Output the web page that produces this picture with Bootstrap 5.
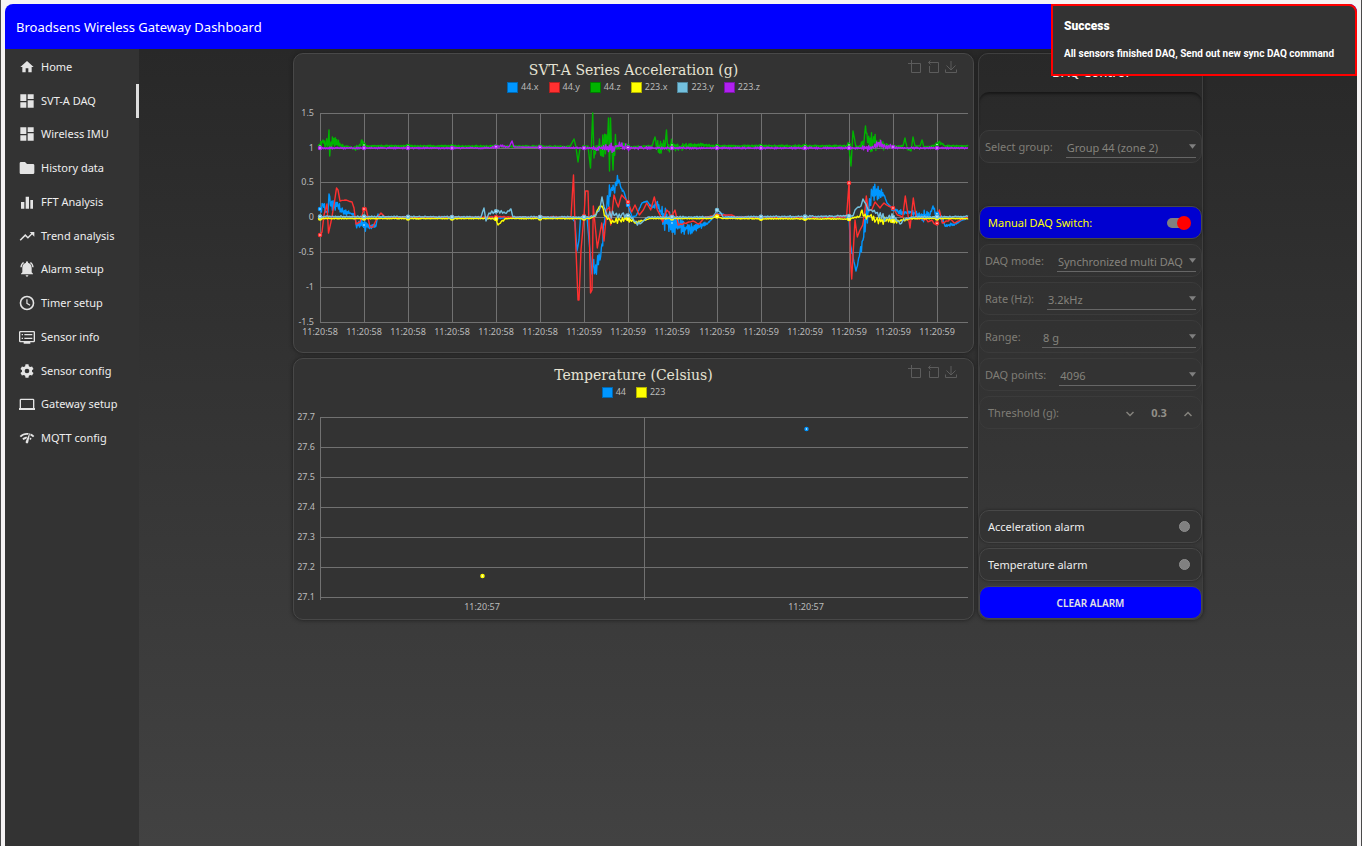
<!DOCTYPE html>
<html lang="en">
<head>
<meta charset="utf-8">
<meta name="viewport" content="width=device-width, initial-scale=1">
<title>Broadsens Wireless Gateway Dashboard</title>
<link href="https://cdn.jsdelivr.net/npm/bootstrap@5.3.0/dist/css/bootstrap.min.css" rel="stylesheet">
<style>
  body { font-family: "Noto Sans", "Open Sans", sans-serif; font-size: 11px; line-height: 16px; color: #eee; background: #f5f3f4; border: solid #4a4a4a; border-width: 0 1px; padding: 4px 4px 0; }
  .app-bar { height: 45px; background: #00f; border-radius: 8px 8px 0 0; padding: 0 11px; }
  .app-bar h1 { font-size: 13px; line-height: 20px; color: #fff; font-weight: 400; }
  .side-nav { width: 134px; background: #333; padding-top: 1px; }
  .side-nav ul { height: 405px; }
  .side-nav a { color: #eee; gap: 6px; padding-left: 14px; }
  .side-nav a.active { border-right: 3px solid #ddd; }
  .side-nav svg { width: 16px; height: 16px; fill: #e4e4e4; }
  .stage { background: linear-gradient(#282828, #424242); padding-top: 4px; }
  .board { max-width: 910px; gap: 4px; }
  .charts { flex: 1 1 0; min-width: 0; gap: 5px; }
  .panel { width: 225px; border: 1px solid #3f3f3f; border-radius: 10px; box-shadow: 0 0 4px #1c1c1c; }
  .chart-box { background: #333; border: 1px solid #484848; border-radius: 10px; box-shadow: 0 0 4px #1c1c1c; }
  .chart-head { height: 46px; padding-top: 8px; }
  .chart-head h2 { font-family: "DejaVu Serif", serif; font-size: 14px; line-height: 17px; color: #e6e3d3; }
  .legend-list { gap: 10px; font-size: 9px; line-height: 16px; color: #bbb; }
  .swatch { width: 11px; height: 11px; margin-right: 3px; border: 1px solid rgba(0,0,0,.3); }
  .tools { top: 5px; right: 14px; gap: 2px; }
  .tools button { width: 16px; height: 16px; border: 0; padding: 1px; background: none; display: flex; }
  .tools svg { width: 14px; height: 14px; fill: none; stroke: #5c5c5c; }
  .plot { width: 100%; height: auto; }
  .plot text { font-size: 9px; fill: #bbb; }
  .grid-lines path { stroke: #717171; fill: none; }
  .series path { fill: none; stroke-width: 1.4; stroke-linejoin: round; }
  .field { height: 33px; border: 1px solid #3b3b3b; border-radius: 10px; background: rgba(51,51,51,.5); color: #7f7d76; padding: 0 5px; }
  .field label { min-width: 44px; flex-shrink: 0; }
  .field select { appearance: none; min-width: 0; margin-left: 13px; padding: 4px 12px 1px 1px; border: 0; border-bottom: 1px solid #666; border-radius: 0; opacity: 1; color: #85837d;
    background: url("data:image/svg+xml,%3Csvg xmlns='http://www.w3.org/2000/svg' viewBox='0 0 8 5'%3E%3Cpath d='M0 0h8L4 5z' fill='%23808080'/%3E%3C/svg%3E") right 8px / 7px 5px no-repeat; }
  .field.live { border-color: #484848; background: #333; color: #eee; padding: 0 10px 0 8px; box-shadow: 0 0 3px #222; }
  .field.power { background: #0000d0; color: #ff0; }
  .panel-title { height: 33px; font-size: 13px; line-height: 37px; }
  .space-one { height: 33px; }
  .space-top { border-radius: 10px 10px 0 0; box-shadow: inset 0 3px 3px -1px #171717; }
  .space-two { height: 71px; }
  .rows { gap: 5px; }
  .power input { appearance: none; width: 24px; height: 10px; margin: 0; border-radius: 5px; background: linear-gradient(#808080, #808080) left / 20px no-repeat; }
  .power input::before { content: ""; display: block; width: 14px; height: 14px; margin: -2px 0 0 10px; border-radius: 50%; background: red; }
  .led { width: 11px; height: 11px; margin-right: 1px; border-radius: 50%; background: #808080; border: 1px solid #8d8d8d; }
  .stepper button { width: 16px; border: 0; padding: 0; background: none; }
  .stepper svg { width: 8px; height: 6px; fill: none; stroke: #85837d; stroke-width: 1.5; }
  .stepper input { width: 42px; border: 0; background: none; color: #929089; font-weight: 700; text-align: center; padding: 0; }
  .clear-btn { height: 33px; border: 1px solid #484848; border-radius: 10px; background: #00f; color: #e4e4e4; font-size: 10px; font-weight: 600; }
  .notice { top: 4px; right: 4px; width: 306px; height: 72px; border: 2px solid #f00; border-radius: 0 8px 0 0; background: #333; color: #fff; padding: 12px 11px; font-family: Roboto, sans-serif; font-weight: 700; font-size: 10px; z-index: 5; }
  .notice strong { font-size: 12px; margin-bottom: 12px; }
</style>
</head>
<body class="d-flex flex-column min-vh-100 position-relative">
<header class="app-bar d-flex align-items-center"><h1 class="m-0">Broadsens Wireless Gateway Dashboard</h1></header>
<div class="notice position-absolute text-nowrap" role="alert">
  <strong class="d-block">Success</strong>
  <span>All sensors finished DAQ, Send out new sync DAQ command</span>
</div>

<div class="d-flex flex-grow-1">
  <nav class="side-nav flex-shrink-0" aria-label="Main">
    <ul class="list-unstyled m-0 d-flex flex-column">
      <li class="flex-fill d-flex"><a href="#" class="w-100 d-flex align-items-center text-decoration-none"><svg viewBox="0 0 24 24"><path d="M10 20v-6h4v6h5v-8h3L12 3 2 12h3v8z"/></svg>Home</a></li>
      <li class="flex-fill d-flex"><a href="#" aria-current="page" class="active w-100 d-flex align-items-center text-decoration-none"><svg viewBox="0 0 24 24"><path d="M2 12h9V2H2v10zm0 10h9v-8H2v8zm11 0h9V11h-9v11zm0-20v7h9V2h-9z"/></svg>SVT-A DAQ</a></li>
      <li class="flex-fill d-flex"><a href="#" class="w-100 d-flex align-items-center text-decoration-none"><svg viewBox="0 0 24 24"><path d="M2 12h9V2H2v10zm0 10h9v-8H2v8zm11 0h9V11h-9v11zm0-20v7h9V2h-9z"/></svg>Wireless IMU</a></li>
      <li class="flex-fill d-flex"><a href="#" class="w-100 d-flex align-items-center text-decoration-none"><svg viewBox="0 0 24 24"><path d="M9 3H3a2 2 0 0 0-2 2v14c0 1.100.9 2 2 2h18a2 2 0 0 0 2-2V8a2 2 0 0 0-2-2h-9z"/></svg>History data</a></li>
      <li class="flex-fill d-flex"><a href="#" class="w-100 d-flex align-items-center text-decoration-none"><svg viewBox="0 0 24 24"><path d="M3 12h5v10H3zM10 4h5v18h-5zM17 9h4v13h-4z"/></svg>FFT Analysis</a></li>
      <li class="flex-fill d-flex"><a href="#" class="w-100 d-flex align-items-center text-decoration-none"><svg viewBox="0 0 24 24"><path d="M16 6l2.290 2.290-4.880 4.880-4-4L1 17.600 2.600 19l6.810-6.810 4 4 6.300-6.290L23 13V6z"/></svg>Trend analysis</a></li>
      <li class="flex-fill d-flex"><a href="#" class="w-100 d-flex align-items-center text-decoration-none"><svg viewBox="0 0 24 24"><path d="M7.580 3.080L6.150 1.650C3.750 3.480 2.170 6.300 2.030 9.500h2a8.450 8.450 0 0 1 3.550-6.420zM19.970 9.500h2c-.15-3.200-1.730-6.020-4.120-7.850l-1.420 1.430a8.500 8.500 0 0 1 3.540 6.420zM19 10c0-3.500-2.300-6.500-5.500-7.300V2a1.500 1.500 0 0 0-3 0v.7C7.300 3.500 5 6.500 5 10v7l-2 2v1h18v-1l-2-2zM12 23.500c1.200 0 2-.9 2-2h-4c0 1.100.9 2 2 2z"/></svg>Alarm setup</a></li>
      <li class="flex-fill d-flex"><a href="#" class="w-100 d-flex align-items-center text-decoration-none"><svg viewBox="0 0 24 24"><path fill-rule="evenodd" d="M12 1a11 11 0 1 0 0 22 11 11 0 0 0 0-22zm0 2.400a8.600 8.600 0 1 1 0 17.200 8.600 8.600 0 0 1 0-17.200zM11 6.500h1.800v5.600l4.300 2.600-.9 1.500L11 13z"/></svg>Timer setup</a></li>
      <li class="flex-fill d-flex"><a href="#" class="w-100 d-flex align-items-center text-decoration-none"><svg viewBox="0 0 24 24"><path fill-rule="evenodd" d="M2 3h20a2 2 0 0 1 2 2v13a2 2 0 0 1-2 2h-5v2H7v-2H2a2 2 0 0 1-2-2V5c0-1.100.9-2 2-2zm0 2v13h20V5zM4 7.500h2v2H4zM8 7.500h12v2H8zM4 13h2v2H4zM8 13h12v2H8z"/></svg>Sensor info</a></li>
      <li class="flex-fill d-flex"><a href="#" class="w-100 d-flex align-items-center text-decoration-none"><svg viewBox="0 0 24 24"><path fill-rule="evenodd" d="M9.800 1h4.400l.6 3 1.900 1.100 2.900-1 2.200 3.800-2.300 2v2.200l2.300 2-2.200 3.800-2.900-1-1.900 1.100-.6 3H9.800l-.6-3-1.900-1.100-2.900 1-2.200-3.800 2.300-2V9.900l-2.300-2 2.200-3.800 2.900 1L9.200 4zM12 7.500a3.500 3.500 0 1 0 0 7 3.500 3.500 0 0 0 0-7z" transform="translate(0 1)"/></svg>Sensor config</a></li>
      <li class="flex-fill d-flex"><a href="#" class="w-100 d-flex align-items-center text-decoration-none"><svg viewBox="0 0 24 24"><path fill-rule="evenodd" d="M3 4h18a2 2 0 0 1 2 2v12h1v3H0v-3h1V6c0-1.100.9-2 2-2zm0 2v12h18V6z"/></svg>Gateway setup</a></li>
      <li class="flex-fill d-flex"><a href="#" class="w-100 d-flex align-items-center text-decoration-none"><svg viewBox="0 0 24 24"><path d="M15.900 5c-.17 0-.32.09-.41.230l-.07.150-5.180 11.650a2 2 0 1 0 3.670 1.480L16.400 5.600c0-.33-.2-.6-.5-.6zM1 9l2 2c2.900-2.900 6.800-4.100 10.500-3.600l1.200-2.700C9.900 3.800 4.700 5.300 1 9zm20 2l2-2a15.400 15.400 0 0 0-5.600-3.600l-.5 2.800c1.500.6 2.900 1.500 4.100 2.800zm-4 4l2-2a9.900 9.900 0 0 0-2.700-1.900l-.5 2.900c.4.300.8.600 1.200 1zM5 13l2 2a7 7 0 0 1 4-2l1.300-2.900C9.700 10 7 11 5 13z"/></svg>MQTT config</a></li>
    </ul>
  </nav>

  <main class="stage flex-grow-1">
    <div class="board d-flex mx-auto align-items-start">
      <div class="charts d-flex flex-column">
        <section class="chart-box position-relative">
          <div class="chart-head text-center">
            <h2 class="m-0">SVT-A Series Acceleration (g)</h2>
            <ul class="legend-list list-unstyled m-0 d-flex justify-content-center" id="accLegend"></ul>
          </div>
          <div class="tools position-absolute d-flex">
            <button type="button" aria-label="Zoom area"><svg viewBox="0 0 14 14"><path d="M3.500 0v12.500h9v-9H0"/></svg></button>
            <button type="button" aria-label="Reset zoom"><svg viewBox="0 0 14 14"><path d="M4.500 .5L2.500 2.500l2 2M2.500 2.500h10v10h-9V6"/></svg></button>
            <button type="button" aria-label="Save as image"><svg viewBox="0 0 14 14"><path d="M1.500 9.500v3h11v-3M7 1v9M2.500 5.500l4.500 4.500 4.500-4.500"/></svg></button>
          </div>
          <svg class="plot d-block" viewBox="294 100 679 252" id="accPlot" role="img" aria-label="Acceleration over time"></svg>
        </section>
        <section class="chart-box position-relative">
          <div class="chart-head text-center">
            <h2 class="m-0">Temperature (Celsius)</h2>
            <ul class="legend-list list-unstyled m-0 d-flex justify-content-center" id="tempLegend"></ul>
          </div>
          <div class="tools position-absolute d-flex">
            <button type="button" aria-label="Zoom area"><svg viewBox="0 0 14 14"><path d="M3.500 0v12.500h9v-9H0"/></svg></button>
            <button type="button" aria-label="Reset zoom"><svg viewBox="0 0 14 14"><path d="M4.500 .5L2.500 2.500l2 2M2.500 2.500h10v10h-9V6"/></svg></button>
            <button type="button" aria-label="Save as image"><svg viewBox="0 0 14 14"><path d="M1.500 9.500v3h11v-3M7 1v9M2.500 5.500l4.500 4.500 4.500-4.500"/></svg></button>
          </div>
          <svg class="plot d-block" viewBox="294 405 679 214" id="tempPlot" role="img" aria-label="Temperature over time"></svg>
        </section>
      </div>

      <form class="panel flex-shrink-0">
        <div class="rows d-flex flex-column">
          <h2 class="panel-title m-0 text-center">DAQ Control</h2>
          <div class="space-one space-top"></div>
          <div class="field d-flex align-items-center"><label for="grp">Select group:</label><select id="grp" class="flex-fill" disabled><option>Group 44 (zone 2)</option></select></div>
          <div class="space-one"></div>
          <div class="field live power d-flex align-items-center justify-content-between"><label for="manual">Manual DAQ Switch:</label><input type="checkbox" role="switch" id="manual" checked></div>
          <div class="field d-flex align-items-center"><label for="mode">DAQ mode:</label><select id="mode" class="flex-fill" disabled><option>Synchronized multi DAQ</option></select></div>
          <div class="field d-flex align-items-center"><label for="rate">Rate (Hz):</label><select id="rate" class="flex-fill" disabled><option>3.2kHz</option></select></div>
          <div class="field d-flex align-items-center"><label for="range">Range:</label><select id="range" class="flex-fill" disabled><option>8 g</option></select></div>
          <div class="field d-flex align-items-center"><label for="points">DAQ points:</label><select id="points" class="flex-fill" disabled><option>4096</option></select></div>
          <div class="field d-flex align-items-center justify-content-between ps-2"><label for="thr">Threshold (g):</label>
            <div class="stepper d-flex align-items-center">
              <button type="button" disabled aria-label="Decrease"><svg viewBox="0 0 8 6"><path d="M.5 1L4 4.500 7.500 1"/></svg></button>
              <input id="thr" type="text" value="0.3" disabled>
              <button type="button" disabled aria-label="Increase"><svg viewBox="0 0 8 6"><path d="M.5 5L4 1.500 7.500 5"/></svg></button>
            </div>
          </div>
          <div class="space-two"></div>
          <div class="field live d-flex align-items-center justify-content-between">Acceleration alarm<span class="led"></span></div>
          <div class="field live d-flex align-items-center justify-content-between">Temperature alarm<span class="led"></span></div>
          <button type="button" class="clear-btn">CLEAR ALARM</button>
        </div>
      </form>
    </div>
  </main>
</div>

<script src="https://cdn.jsdelivr.net/npm/bootstrap@5.3.0/dist/js/bootstrap.bundle.min.js"></script>
<script>
  // Each series: x y spread triples; the line is interpolated between them and jittered by the spread.
  const series = [
    { name: '44.x', color: '#0096ff', step: .7, pts: '320 209 4,323 204 8,326 212 3,328 212 0,329 194 0,331 206 7,338 206 5,343 212 3,350 213 2,354 215 1,356 224 4,364 225 7,370 227 4,376 226 1,378 214 0,380 218 .6,572 218 .6,575 222 0,577 251 0,579 240 0,580.5 218 0,587 217 0,589 240 0,592 274 0,593 262 8,595 272 5,597 265 9,600 260 11,602 244 11,604 225 5,606 210 5,608 200 9,611 190 13,614 190 9,616 182 13,619 180 10,621 188 4,624 192 0,627 202 0,629 208 0,632 217 1,636 216 0,642 203 1,647 201 1,652 208 1,656 204 4,660 210 6,664 218 14,670 222 11,680 227 9,690 229 6,700 226 4,708 223 1,714 217 0,720 213 1,730 217 .6,846 217 .6,849 218 0,850.500 245 0,854 262 6,856 271 0,858 262 4,860 252 6,863 240 11,866 215 13,870 205 14,872 192 10,876 192 9,880 192 6,884 195 1,887 203 0,893 209 1,898 212 2,905 212 3,915 213 3,920 216 7,930 215 5,933 206 2,935 213 5,940 215 4,945 226 3,955 224 1,962 220 1,968 218 0' },
    { name: '44.y', color: '#ff3030', step: 2, pts: '320 235 0,322 232 0,324 215 0,327 204 0,328.5 233 0,331 222 0,334 205 0,336.5 188 0,338 190 0,340 201 0,345 200 .5,352 202 0,354 208 0,356 224 0,360 222 0,364 209 0,366 208 0,370 227 0,373 227 0,377 218 0,381 213 0,385 217 0,390 217 .6,571 217 .6,572 200 0,573.5 175 0,575 225 0,578 300 0,579 300 0,581 250 0,584 216 0,585.5 191 0,588 191 0,589.5 240 0,590.5 293 0,592 290 0,593.3 206 0,597.3 248 0,601.7 223 0,604 241 0,606.7 210 0,609.5 207 0,610.7 225 0,614 195 0,618.3 207 2,621.7 195 0,628 202 0,631.7 212 0,635 205 0,639.3 215 0,643.3 210 0,646.7 203 0,650.7 210 0,654.3 197 0,657.3 210 0,660 215 0,662.7 222 0,666.7 210 0,671.7 217 2,675 210 0,678.3 225 1,686.7 223 1,693 221 2,699 224 0,705 217 0,720 215 .5,731.7 215 0,736.7 217 .6,845 217 .6,846.7 215 0,849 183 0,850.7 263 0,851.7 279 0,855 220 0,857.3 237 0,860 230 0,862.7 225 0,865 210 0,866.3 196 0,868.3 210 2,871.7 210 0,875 202 0,880 208 0,884 203 1,888.3 206 0,893.3 208 0,897.3 215 0,902.7 217 0,905.3 196 0,907.7 213 0,910 228 0,913.3 198 0,916 217 0,920 219 3,930 221 3,936.7 225 0,939.3 210 0,942.3 223 1,950 219 2,955 223 1,960 220 0,968 217 0' },
    { name: '44.z', color: '#00b400', step: .7, pts: '320 146 3,323 140 6,326 143 7,328 145 4,329 130 0,329.7 156 0,331 142 7,337 144 5,345 147 1,350 147 1.5,356 149 3,360 145 4,362 140 3,364 145 3,366 146 1,570 146.500 1,574 139 0,576 147 0,578 162 0,580 148 0,588 146 0,590.5 168 0,592.7 113 0,594 158 0,596 146 8,600 148 10,604 145 12,607 144 15,608.5 118 0,609.5 171 0,610.5 118 0,611.5 150 15,613 170 0,614 147 20,618 147 5,625 145 3,630 147 1,652 146 1,655 137 0,657 147 6,663 146 8,665 148 4,666.5 130 0,668 150 5,672 145 7,680 148 5,684 146 3,700 145 2,715 146 1,846 146 1,849 145 4,851 166 0,853 131 0,856 147 1,860 146 7,864 142 8,865.5 126 0,868 142 12,873 141 12,878 145 7,885 146 4,890 147 1,903 146 1,905 138 0,907 148 2,911 151 0,913 137 0,915 146 0,920 146 0,922 140 0,924 147 1,935 146 1,940 142 3,945 146 1,968 146 .7' },
    { name: '223.x', color: '#ffff00', step: 1.2, pts: '320 218.500 .5,490 218.500 .5,496 219 1,498 225 0,501 222 1,506 218.500 .5,590 218.500 .5,595 216 1,599 207 1,602 206 2,605 216 2,610 220 3,615 222 4,620 220 4,628 219 4,634 222 2,642 221 1,650 218.500 .5,712 218.500 .5,716 216 .5,722 218.500 .5,849 219 .5,860 216 1,862 210 2,864 216 3,870 216 3,876 220 4,885 221 4,893 221 3,900 221 2,910 218.500 .5,968 218.500 .5' },
    { name: '223.y', color: '#73c0de', step: 1.4, pts: '320 216.500 .8,481 217 .8,484 208 0,486 221 0,489 213 2,497 211 2,505 213 2,511 209 1,513 217 .8,590 217 .8,596 215 1,600 208 1,602 197 0,604 207 3,607 215 4,615 215 4,622 214 4,630 216 1,636 222 3,640 224 2,648 217 .8,712 217 .8,715 214 0,717 210 0,720 212 0,723 217 .8,853 216 .8,855 210 0,858 207 1,861 206 1,863 199 0,867 207 2,870 210 4,876 213 4,885 219 4,893 217 5,900 224 2,905 219 1,912 217 .8,968 216.500 .8' },
    { name: '223.z', color: '#b020f0', step: .9, pts: '320 148 .9,490 148 .9,500 146 2,509 147 0,512 141 0,514 147 0,590 148 1,600 148 3,604 148 4,615 147 6,620 146 4,625 147 6,632 148 2,660 148 1,860 148 1,866 148 4,874 147 2,878 143 5,885 146 3,893 147 2,898 148 1,968 148 .9' }
  ];
  const ticks = [320, 364, 408, 452, 496, 540, 584, 628, 672, 717, 761, 805, 849, 893, 937];

  let seed = 7;
  const rnd = () => (seed = (seed * 16807) % 2147483647) / 2147483647;

  const keys = s => s.pts.split(',').map(p => p.split(' ').map(Number));

  function trace(s) {
    const k = keys(s);
    const out = [];
    let flip = 1;
    for (let i = 0; i < k.length - 1; i++) {
      const [x0, y0, a0] = k[i], [x1, y1, a1] = k[i + 1];
      out.push([x0, y0]);
      for (let x = x0 + s.step; x < x1 - .3; x += s.step) {
        const t = (x - x0) / (x1 - x0);
        flip = -flip;
        out.push([x, y0 + (y1 - y0) * t + flip * rnd() * (a0 + (a1 - a0) * t)]);
      }
    }
    out.push(k[k.length - 1].slice(0, 2));
    return out;
  }
  // Height of the un-jittered line at x, where the sample markers sit.
  function valueAt(s, x) {
    const k = keys(s);
    const i = Math.max(1, k.findIndex(p => p[0] >= x));
    const [x0, y0] = k[i - 1], [x1, y1] = k[i];
    return y0 + (y1 - y0) * (x - x0) / (x1 - x0);
  }
  const label = (x, y, t, anchor) => `<text x="${x}" y="${y}" text-anchor="${anchor}">${t}</text>`;
  const legend = (id, items) => document.getElementById(id).innerHTML = items.map(([n, c]) =>
    `<li class="d-flex align-items-center"><span class="swatch" style="background:${c}"></span>${n}</li>`).join('');

  // Acceleration chart
  let grid = '', text = '', lines = '', dots = '';
  [1.5, 1, .5, 0, -.5, -1, -1.5].forEach((v, i) => {
    const y = 113 + i * 35 - (i > 1 ? 1 : 0) + .5;
    grid += `<path d="M320 ${y}H968"/>`;
    text += label(314, y + 2, v, 'end');
  });
  ticks.forEach((x, i) => {
    grid += `<path d="M${x + .5} 113V322"/>`;
    text += label(x, 335, i < 6 ? '11:20:58' : '11:20:59', 'middle');
  });
  series.forEach(s => {
    lines += `<path stroke="${s.color}" d="M${trace(s).map(q => q[0].toFixed(1) + ' ' + q[1].toFixed(1)).join('L')}"/>`;
    ticks.forEach(x => {
      dots += `<circle cx="${x}" cy="${valueAt(s, x).toFixed(1)}" r="1.500" fill="#fff" stroke="${s.color}" stroke-width="1.500"/>`;
    });
  });
  document.getElementById('accPlot').innerHTML = `<g class="grid-lines">${grid}</g>${text}<g class="series">${lines}</g>${dots}`;
  legend('accLegend', series.map(s => [s.name, s.color]));

  // Temperature chart
  grid = '<path d="M320.500 417V600M644.500 417V600"/>';
  text = label(482, 610, '11:20:57', 'middle') + label(806, 610, '11:20:57', 'middle');
  for (let i = 0; i < 7; i++) {
    const y = 417 + i * 30 + .5;
    grid += `<path d="M320 ${y}H968"/>`;
    text += label(315, y + 2, (27.7 - i / 10).toFixed(1), 'end');
  }
  document.getElementById('tempPlot').innerHTML = `<g class="grid-lines">${grid}</g>${text}
    <circle cx="482.500" cy="576" r="1.500" fill="#fff" stroke="#ff0" stroke-width="1.500"/>
    <circle cx="806.500" cy="429" r="1.500" fill="#fff" stroke="#0096ff" stroke-width="1.500"/>`;
  legend('tempLegend', [['44', '#0096ff'], ['223', '#ffff00']]);
</script>
</body>
</html>
